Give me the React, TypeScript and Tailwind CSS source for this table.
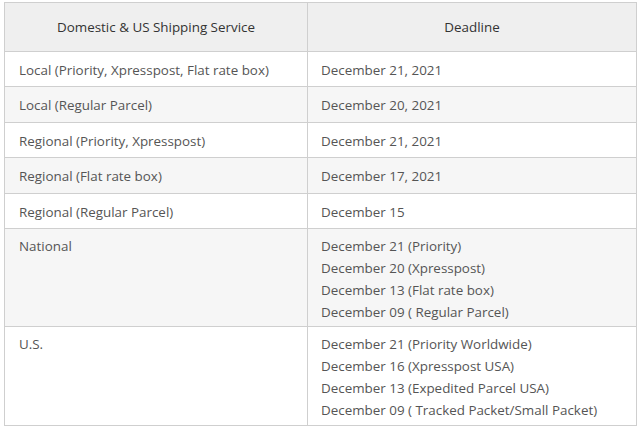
const rows: { service: string; deadline: string[]; shaded?: boolean }[] = [
  { service: "Local (Priority, Xpresspost, Flat rate box)", deadline: ["December 21, 2021"] },
  { service: "Local (Regular Parcel)", deadline: ["December 20, 2021"], shaded: true },
  { service: "Regional (Priority, Xpresspost)", deadline: ["December 21, 2021"] },
  { service: "Regional (Flat rate box)", deadline: ["December 17, 2021"], shaded: true },
  { service: "Regional (Regular Parcel)", deadline: ["December 15"] },
  {
    service: "National",
    deadline: [
      "December 21 (Priority)",
      "December 20 (Xpresspost)",
      "December 13 (Flat rate box)",
      "December 09 ( Regular Parcel)",
    ],
    shaded: true,
  },
  {
    service: "U.S.",
    deadline: [
      "December 21 (Priority Worldwide)",
      "December 16 (Xpresspost USA)",
      "December 13 (Expedited Parcel USA)",
      "December 09 ( Tracked Packet/Small Packet)",
    ],
  },
];

export default function App() {
  return (
    <div className="w-[643px] h-[432px] bg-white pt-[2px] pl-[4px] font-['Open_Sans',sans-serif] text-[13.4px] text-[#555]">
      <div className="w-[633px] border border-[#cfcfcf]">
        {/* Header */}
        <div className="grid grid-cols-[303px_1fr] h-[49px] bg-[#efefef] border-b border-[#cfcfcf] text-[#333]">
          <div className="flex items-center justify-center border-r border-[#cfcfcf]">
            Domestic &amp; US Shipping Service
          </div>
          <div className="flex items-center justify-center">Deadline</div>
        </div>

        {rows.map((row, i) => {
          const multi = row.deadline.length > 1;
          return (
            <div
              key={i}
              className={`grid grid-cols-[303px_1fr] ${row.shaded ? "bg-[#f6f6f6]" : "bg-white"} ${
                i < rows.length - 1 ? "border-b border-[#cfcfcf]" : ""
              }`}
            >
              <div
                className={`border-r border-[#cfcfcf] pl-[14px] leading-[22px] ${
                  multi ? "pt-[6px] pb-[3.5px]" : "pt-[7px] pb-[5.4px]"
                }`}
              >
                {row.service}
              </div>
              <div
                className={`pl-[13px] leading-[22px] ${multi ? "pt-[6px] pb-[3.5px]" : "pt-[7px] pb-[5.4px]"}`}
              >
                {row.deadline.map((d) => (
                  <div key={d}>{d}</div>
                ))}
              </div>
            </div>
          );
        })}
      </div>
    </div>
  );
}
